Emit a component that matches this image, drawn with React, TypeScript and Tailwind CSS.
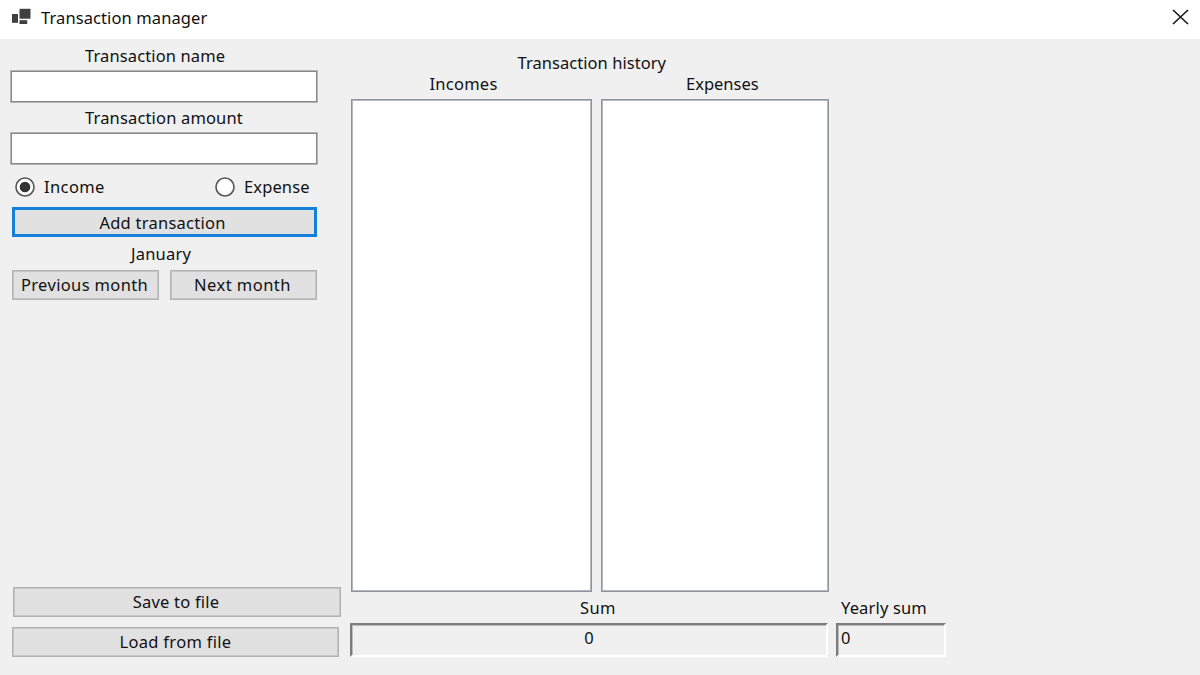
import { useState, type ReactNode } from "react";

function Label({ children, className }: { children: ReactNode; className: string }) {
  return <div className={`h-5 whitespace-nowrap leading-5 ${className}`}>{children}</div>;
}

function PushButton({ children, className, onClick }: { children: ReactNode; className: string; onClick?: () => void }) {
  return (
    <button onClick={onClick} className={`flex items-center justify-center whitespace-nowrap bg-[#e1e1e1] leading-5 ${className}`}>
      {children}
    </button>
  );
}

function Radio({ label, checked, className, onClick }: { label: string; checked: boolean; className: string; onClick: () => void }) {
  return (
    <button role="radio" aria-checked={checked} onClick={onClick} className={`flex h-5 items-center gap-[9px] leading-5 ${className}`}>
      <svg width="20" height="20" viewBox="0 0 20 20" className="shrink-0">
        <circle cx="10" cy="10" r="9" fill="#fff" stroke="#555" strokeWidth="1.6" />
        {checked && <circle cx="10" cy="10" r="5.3" fill="#333" />}
      </svg>
      <span className="whitespace-nowrap">{label}</span>
    </button>
  );
}

const months = ["January", "February", "March", "April", "May", "June", "July", "August", "September", "October", "November", "December"];

export default function App() {
  const [kind, setKind] = useState("income");
  const [month, setMonth] = useState(0);

  return (
    <div className="flex h-[675px] w-[1200px] flex-col overflow-hidden bg-[#f0f0f0] font-['Noto_Sans','Open_Sans',sans-serif] text-[16.5px] text-[#111]">
      <header className="flex h-[39px] shrink-0 items-start justify-between bg-white pl-3 pr-[11px]">
        <div className="flex items-start gap-[10px] pt-2">
          <svg width="19" height="17" viewBox="0 0 19 17" fill="#3f3f3f">
            <rect x="0" y="6" width="6" height="8.8" />
            <rect x="7.5" y="0.8" width="11" height="9.9" />
            <rect x="7.5" y="12.2" width="7.7" height="3.8" />
          </svg>
          <h1 className="leading-5 tracking-[0.1px]">Transaction manager</h1>
        </div>
        <button aria-label="Close" className="mt-[9px]">
          <svg width="17" height="16" viewBox="0 0 17 16" stroke="#1c1c1c" strokeWidth="1.7">
            <path d="M1 1L16 15M16 1L1 15" />
          </svg>
        </button>
      </header>

      <main className="flex flex-1">
        <section className="flex w-[350px] shrink-0 flex-col pt-[7px]">
          <Label className="pl-[85px] tracking-[0.12px]">Transaction name</Label>
          <input aria-label="Transaction name" className="ml-[10px] mt-1 h-[33px] w-[308px] border border-[#b4b4b4] bg-white px-1 shadow-[inset_0_0_0_1px_#888888] outline-none" />
          <Label className="mt-[5px] pl-[85px] tracking-[0.16px]">Transaction amount</Label>
          <input aria-label="Transaction amount" className="ml-[10px] mt-1 h-[33px] w-[308px] border border-[#b4b4b4] bg-white px-1 shadow-[inset_0_0_0_1px_#888888] outline-none" />
          <div className="mt-3 flex pl-[15px]">
            <Radio label="Income" checked={kind === "income"} onClick={() => setKind("income")} className="w-[200px] tracking-[0.4px]" />
            <Radio label="Expense" checked={kind === "expense"} onClick={() => setKind("expense")} className="w-[110px] tracking-[0.12px]" />
          </div>
          <PushButton className="ml-3 mt-[10px] h-[30px] w-[305px] border-[3px] border-[#1480da] pr-1 pt-px tracking-[0.25px]">Add transaction</PushButton>
          <Label className="mt-[7px] w-[322px] text-center tracking-[0.2px]">{months[month]}</Label>
          <div className="mt-[6px] flex gap-[11px] pl-3">
            <PushButton onClick={() => setMonth((month + 11) % 12)} className="h-[30px] w-[147px] border border-[#b2b2b2] pr-0.5 tracking-[0.35px] shadow-[inset_0_0_0_1px_#c6c6c6]">Previous month</PushButton>
            <PushButton onClick={() => setMonth((month + 1) % 12)} className="h-[30px] w-[147px] border border-[#b2b2b2] pr-0.5 tracking-[0.45px] shadow-[inset_0_0_0_1px_#c6c6c6]">Next month</PushButton>
          </div>
          <div className="mb-[18px] mt-auto flex flex-col gap-[10px]">
            <PushButton className="ml-[13px] h-[30px] w-[328px] border border-[#b2b2b2] pr-0.5 tracking-[0.2px] shadow-[inset_0_0_0_1px_#c6c6c6]">Save to file</PushButton>
            <PushButton className="ml-3 h-[30px] w-[327px] border border-[#b2b2b2] tracking-[0.3px] shadow-[inset_0_0_0_1px_#c6c6c6]">Load from file</PushButton>
          </div>
        </section>

        <section className="flex w-[486px] shrink-0 flex-col pt-[14px]">
          <Label className="pl-[167.5px] tracking-[0.05px]">Transaction history</Label>
          <div className="mt-px flex gap-[9px] pl-px">
            <div className="w-[241px]">
              <Label className="pl-[78.5px] tracking-[0.25px]">Incomes</Label>
              <div className="mt-[5px] h-[493px] border border-[#8f949c] bg-white shadow-[inset_0_0_0_1px_#b4b7bd]" />
            </div>
            <div className="w-[228px]">
              <Label className="pl-[85px]">Expenses</Label>
              <div className="mt-[5px] h-[493px] border border-[#8f949c] bg-white shadow-[inset_0_0_0_1px_#b4b7bd]" />
            </div>
          </div>
          <Label className="mt-[6px] pl-[230px] tracking-[0.4px]">Sum</Label>
          <div className="mt-[5px] h-[34px] w-[478px] border-2 border-b-white border-l-[#7c7c7c] border-r-white border-t-[#7c7c7c] pt-[3px] text-center leading-5 shadow-[inset_1px_1px_0_0_#bdbdbd]">0</div>
        </section>

        <section className="flex flex-col pt-[559px]">
          <Label className="pl-[5px] tracking-[0.15px]">Yearly sum</Label>
          <div className="mt-[5px] h-[34px] w-[110px] border-2 border-b-white border-l-[#7c7c7c] border-r-white border-t-[#7c7c7c] pl-[3px] pt-[3px] leading-5 shadow-[inset_1px_1px_0_0_#bdbdbd]">0</div>
        </section>
      </main>
    </div>
  );
}
